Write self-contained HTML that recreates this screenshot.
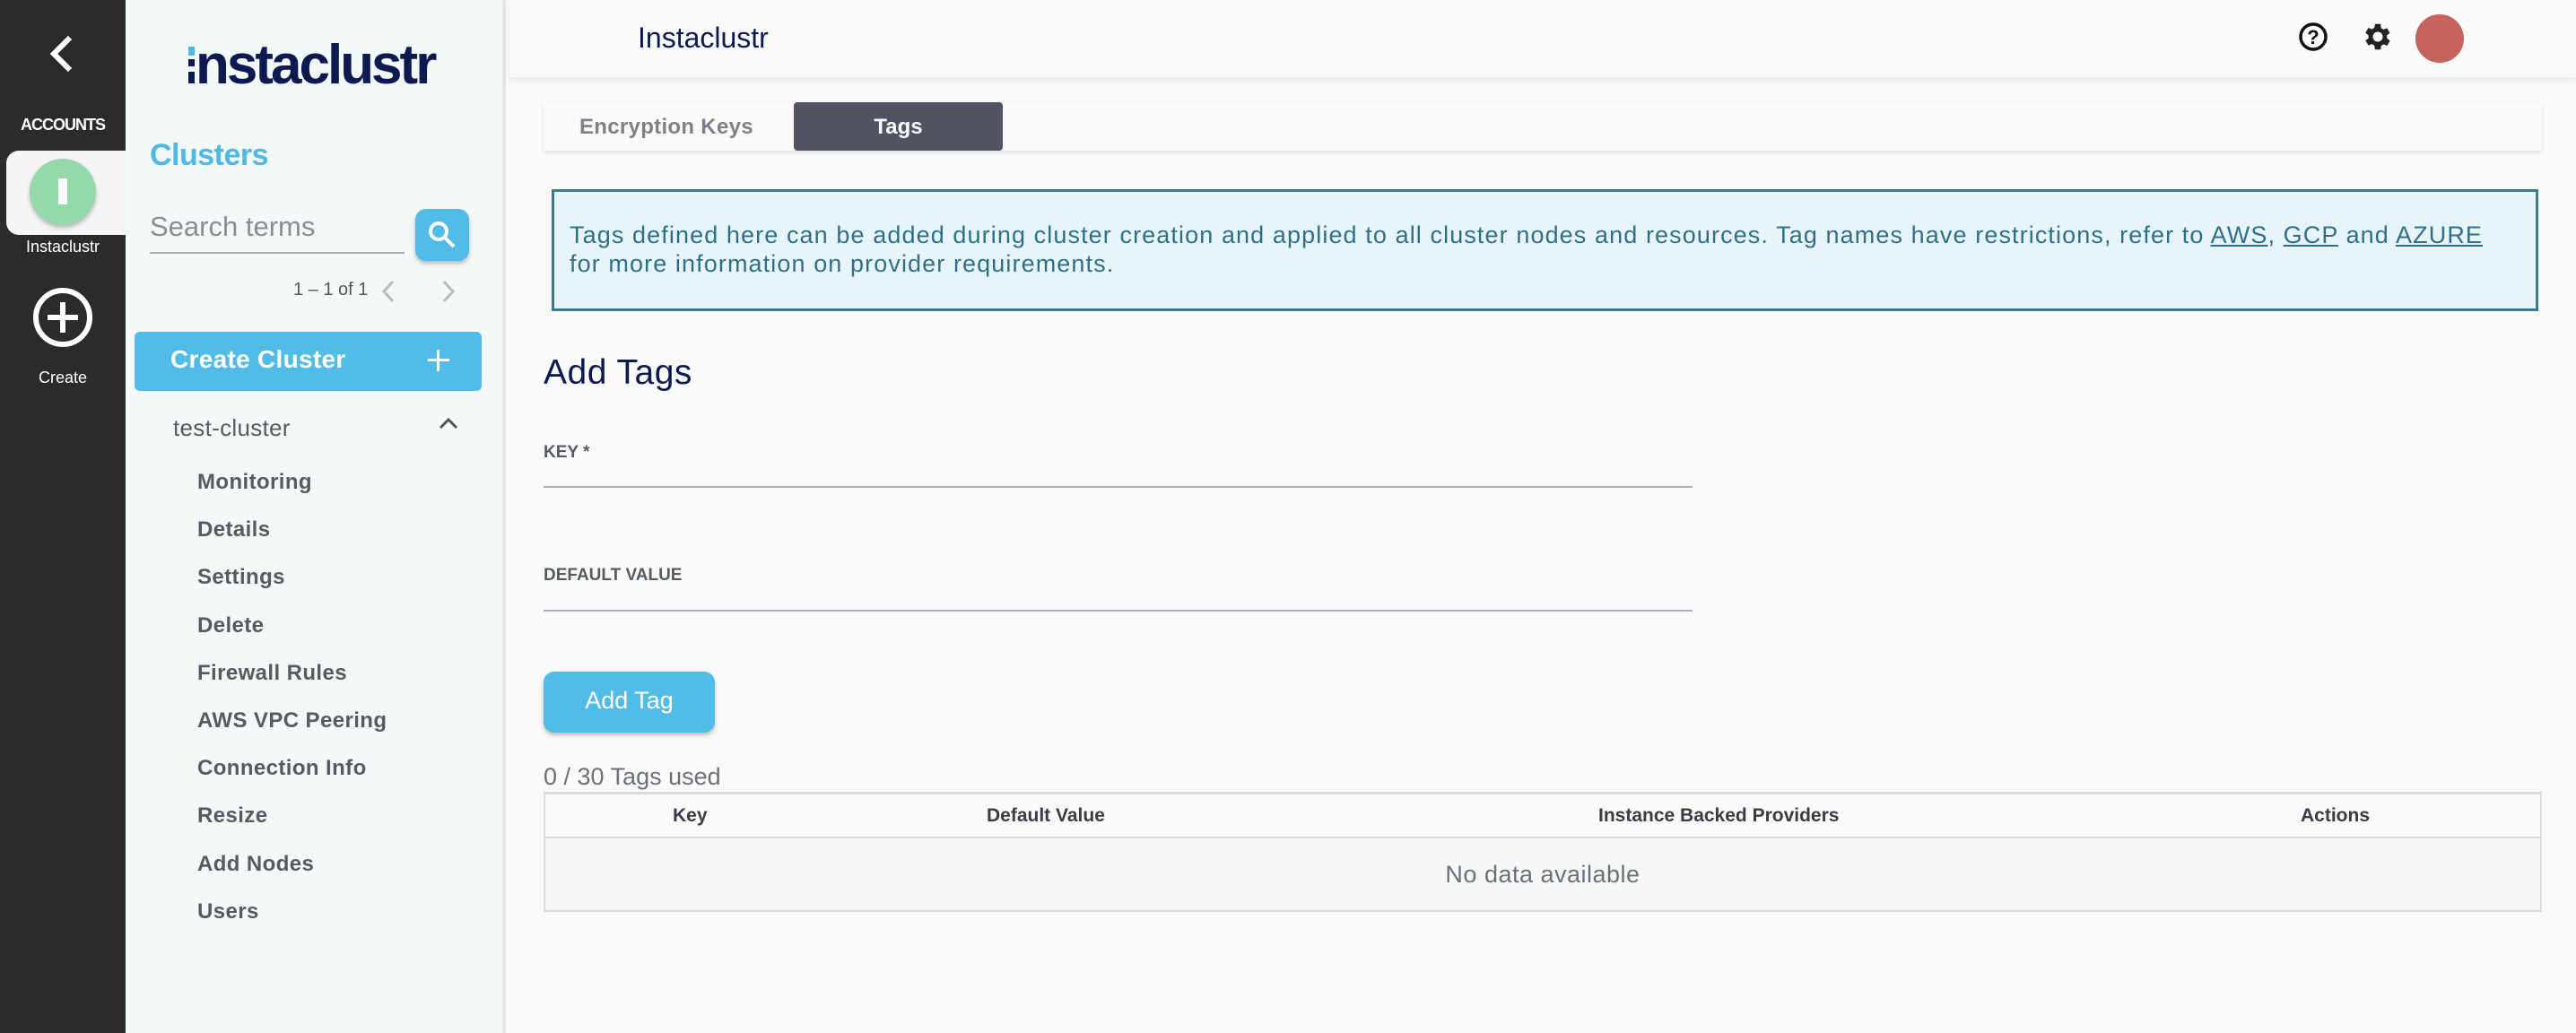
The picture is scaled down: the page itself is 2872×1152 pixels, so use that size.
<!DOCTYPE html>
<html><head><meta charset="utf-8"><style>
*{margin:0;padding:0;box-sizing:border-box}
body{width:2872px;height:1152px;overflow:hidden;background:#fafafa;font-family:"Liberation Sans",sans-serif;position:relative}
.a{position:absolute;white-space:nowrap}
</style></head><body>
<!-- dark rail -->
<div class="a" style="left:0;top:0;width:140px;height:1152px;background:#2b2b2b"></div>
<svg class="a" style="left:50px;top:38px" width="40" height="44" viewBox="0 0 40 44"><path d="M28 4 L10 22 L28 40" stroke="#fff" stroke-width="6" fill="none"/></svg>
<div class="a" style="left:0;width:140px;top:129px;text-align:center;color:#fff;font-weight:bold;font-size:18px;letter-spacing:-1px">ACCOUNTS</div>
<div class="a" style="left:7px;top:168px;width:133px;height:94px;background:#f5f5f5;border-radius:14px 0 0 14px"></div>
<div class="a" style="left:33px;top:177px;width:74px;height:74px;border-radius:50%;background:#95d8a9;box-shadow:0 3px 5px rgba(0,0,0,.25)"></div>
<div class="a" style="left:65px;top:199px;width:10px;height:29px;background:#fff"></div>
<div class="a" style="left:0;width:140px;top:265px;text-align:center;color:#fff;font-size:18px">Instaclustr</div>
<div class="a" style="left:37px;top:321px;width:66px;height:66px;border-radius:50%;border:6px solid #fff"></div>
<div class="a" style="left:53px;top:351px;width:34px;height:6px;background:#fff"></div>
<div class="a" style="left:67px;top:337px;width:6px;height:34px;background:#fff"></div>
<div class="a" style="left:0;width:140px;top:411px;text-align:center;color:#fff;font-size:18px">Create</div>
<!-- light sidebar -->
<div class="a" style="left:140px;top:0;width:424px;height:1152px;background:#f3f8f9;border-right:4px solid #e3e5e7"></div>
<div class="a" style="left:210px;top:52px;width:7px;height:10px;background:#4fb9e4"></div>
<div class="a" style="left:210px;top:66px;width:7px;height:8px;background:#0d1a50"></div>
<div class="a" style="left:210px;top:80px;width:7px;height:13px;background:#0d1a50"></div>
<div class="a" style="left:218px;top:41px;color:#0d1a50;font-weight:bold;font-size:62px;letter-spacing:-3px;line-height:64px">nstaclustr</div>
<div class="a" style="left:167px;top:154px;color:#4fb9e4;font-weight:bold;font-size:34px;letter-spacing:-0.5px">Clusters</div>
<div class="a" style="left:167px;top:235px;color:#8a8d93;font-size:31px">Search terms</div>
<div class="a" style="left:167px;top:281px;width:284px;height:2px;background:#a8acb8"></div>
<div class="a" style="left:463px;top:233px;width:60px;height:58px;border-radius:12px;background:#52bce8;box-shadow:0 3px 5px rgba(0,0,0,.25)"></div>
<svg class="a" style="left:476px;top:245px" width="34" height="34" viewBox="0 0 34 34"><circle cx="13" cy="13" r="9" stroke="#fff" stroke-width="4" fill="none"/><path d="M20 20 L30 30" stroke="#fff" stroke-width="4"/></svg>
<div class="a" style="left:327px;top:312px;color:#555;font-size:20px">1 – 1 of 1</div>
<svg class="a" style="left:423px;top:311px" width="20" height="28"><path d="M15 3 L5 14 L15 25" stroke="#bbb" stroke-width="3" fill="none"/></svg>
<svg class="a" style="left:490px;top:311px" width="20" height="28"><path d="M5 3 L15 14 L5 25" stroke="#bbb" stroke-width="3" fill="none"/></svg>
<div class="a" style="left:150px;top:370px;width:387px;height:66px;border-radius:6px;background:#52bce8"></div>
<div class="a" style="left:190px;top:385px;color:#fff;font-weight:bold;font-size:28px;letter-spacing:0.3px">Create Cluster</div>
<div class="a" style="left:477px;top:400px;width:24px;height:3px;background:#fff"></div>
<div class="a" style="left:487px;top:390px;width:3px;height:24px;background:#fff"></div>
<div class="a" style="left:193px;top:462px;color:#555a63;font-size:26px;letter-spacing:0.3px">test-cluster</div>
<svg class="a" style="left:488px;top:464px" width="24" height="16"><path d="M3 13 L12 4 L21 13" stroke="#555" stroke-width="3" fill="none"/></svg>
<div class="a" style="left:220px;top:511px;color:#555a63;font-size:24px;font-weight:bold;line-height:53.2px;letter-spacing:0.4px">Monitoring<br>Details<br>Settings<br>Delete<br>Firewall Rules<br>AWS VPC Peering<br>Connection Info<br>Resize<br>Add Nodes<br>Users</div>
<!-- header -->
<div class="a" style="left:568px;top:0;width:2304px;height:86px;background:#fafafa;box-shadow:0 3px 8px rgba(0,0,0,.08)"></div>
<div class="a" style="left:711px;top:24px;color:#0d1a50;font-size:32px">Instaclustr</div>
<svg class="a" style="left:2561px;top:23px" width="36" height="36"><circle cx="18" cy="18" r="14" stroke="#111" stroke-width="3.5" fill="none"/><text x="18" y="26" text-anchor="middle" font-size="22" font-weight="bold" font-family="Liberation Sans" fill="#111">?</text></svg>
<svg class="a" style="left:2632px;top:22px" width="38" height="38" viewBox="0 0 24 24"><path fill="#222" d="M19.4 13a7.5 7.5 0 000-2l2.1-1.6-2-3.5-2.5 1a7 7 0 00-1.7-1L15 3h-4l-.4 2.7a7 7 0 00-1.7 1l-2.5-1-2 3.5L6.5 11a7.5 7.5 0 000 2l-2.1 1.6 2 3.5 2.5-1a7 7 0 001.7 1L11 21h4l.4-2.7a7 7 0 001.7-1l2.5 1 2-3.5zM13 15.5A3.5 3.5 0 1113 8.5a3.5 3.5 0 010 7z" transform="translate(-1 0)"/></svg>
<div class="a" style="left:2693px;top:16px;width:54px;height:54px;border-radius:50%;background:#c5635e"></div>
<!-- tabs -->
<div class="a" style="left:606px;top:114px;width:2228px;height:54px;background:#fafafa;box-shadow:0 2px 5px rgba(0,0,0,.1)"></div>
<div class="a" style="left:646px;top:128px;color:#7d8088;font-size:24px;font-weight:bold;letter-spacing:0.3px">Encryption Keys</div>
<div class="a" style="left:885px;top:114px;width:233px;height:54px;background:#4f5362;border-radius:4px"></div>
<div class="a" style="left:885px;width:233px;top:128px;text-align:center;color:#fff;font-size:24px;font-weight:bold">Tags</div>
<!-- info -->
<div class="a" style="left:615px;top:211px;width:2215px;height:136px;background:#e7f5fa;border:3px solid #3c7a8e"></div>
<div class="a" style="left:635px;top:246px;color:#2e7088;font-size:27px;line-height:32px;letter-spacing:1.1px">Tags defined here can be added during cluster creation and applied to all cluster nodes and resources. Tag names have restrictions, refer to <u>AWS</u>, <u>GCP</u> and <u>AZURE</u><br>for more information on provider requirements.</div>
<div class="a" style="left:606px;top:394px;color:#0d1a50;font-size:39px;letter-spacing:0.5px">Add Tags</div>
<div class="a" style="left:606px;top:494px;color:#555a63;font-size:19px;font-weight:bold">KEY *</div>
<div class="a" style="left:606px;top:542px;width:1281px;height:2px;background:#a8acb8"></div>
<div class="a" style="left:606px;top:631px;color:#555a63;font-size:19px;font-weight:bold">DEFAULT VALUE</div>
<div class="a" style="left:606px;top:680px;width:1281px;height:2px;background:#a8acb8"></div>
<div class="a" style="left:606px;top:749px;width:191px;height:68px;border-radius:12px;background:#52bce8;box-shadow:0 3px 5px rgba(0,0,0,.25)"></div>
<div class="a" style="left:606px;width:191px;top:766px;text-align:center;color:#fff;font-size:27px">Add Tag</div>
<div class="a" style="left:606px;top:851px;color:#6c7079;font-size:27px">0 / 30 Tags used</div>
<div class="a" style="left:606px;top:883px;width:2228px;height:134px;border:2px solid #dcdcdc;border-top-width:3px;background:#f6f7f7"></div>
<div class="a" style="left:608px;top:886px;width:2224px;height:49px;background:#fafafa;border-bottom:2px solid #dcdcdc"></div>
<div class="a" style="top:898px;left:750px;color:#393c45;font-size:21px;font-weight:bold">Key</div>
<div class="a" style="top:898px;left:1100px;color:#393c45;font-size:21px;font-weight:bold">Default Value</div>
<div class="a" style="top:898px;left:1782px;color:#393c45;font-size:21px;font-weight:bold">Instance Backed Providers</div>
<div class="a" style="top:898px;left:2565px;color:#393c45;font-size:21px;font-weight:bold">Actions</div>
<div class="a" style="top:960px;left:608px;width:2224px;text-align:center;color:#6c7079;font-size:27px;letter-spacing:0.5px">No data available</div>
</body></html>
